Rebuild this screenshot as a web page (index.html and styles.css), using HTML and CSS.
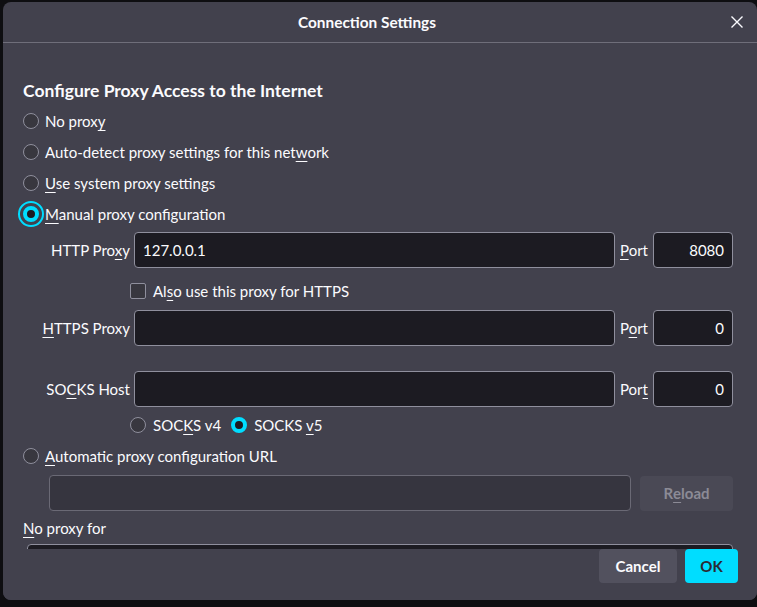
FILE: index.html
```html
<!DOCTYPE html>
<html>
<head>
<meta charset="utf-8">
<link rel="stylesheet" href="styles.css">
</head>
<body>
<div class="dialog">
  <div class="header">
    <div class="title">Connection Settings</div>
    <div class="close">
      <svg width="14" height="14" viewBox="0 0 14 14"><path d="M1.5 1.5 L12.5 12.5 M12.5 1.5 L1.5 12.5" stroke="#fbfbfe" stroke-width="1.4" fill="none"/></svg>
    </div>
  </div>
  <div class="content">
    <h1 class="heading">Configure Proxy Access to the Internet</h1>
    <div class="radio-row"><span class="radio"></span><span>No prox<u>y</u></span></div>
    <div class="radio-row"><span class="radio"></span><span>Auto-detect proxy settings for this net<u>w</u>ork</span></div>
    <div class="radio-row"><span class="radio"></span><span><u>U</u>se system proxy settings</span></div>
    <div class="radio-row"><span class="radio checked focused"></span><span><u>M</u>anual proxy configuration</span></div>

    <div class="proxy-grid">
      <label class="lbl">HTTP Pro<u>x</u>y</label>
      <div class="input">127.0.0.1</div>
      <label class="port-lbl"><u>P</u>ort</label>
      <div class="input port">8080</div>

      <div class="check-row"><span class="checkbox"></span><span>Al<u>s</u>o use this proxy for HTTPS</span></div>

      <label class="lbl"><u>H</u>TTPS Proxy</label>
      <div class="input"></div>
      <label class="port-lbl">P<u>o</u>rt</label>
      <div class="input port">0</div>

      <div class="spacer"></div>

      <label class="lbl">SO<u>C</u>KS Host</label>
      <div class="input"></div>
      <label class="port-lbl">Por<u>t</u></label>
      <div class="input port">0</div>

      <div class="socks-row">
        <span class="socks-opt"><span class="radio"></span><span>SOC<u>K</u>S v4</span></span>
        <span class="socks-opt"><span class="radio checked"></span><span>SOCKS <u>v</u>5</span></span>
      </div>
    </div>

    <div class="radio-row auto"><span class="radio"></span><span><u>A</u>utomatic proxy configuration URL</span></div>
    <div class="url-row">
      <div class="input disabled"></div>
      <div class="btn-disabled">R<u>e</u>load</div>
    </div>
    <div class="noproxy-label"><u>N</u>o proxy for</div>
    <div class="textarea"></div>
  </div>
  <div class="footer">
    <button class="btn cancel">Cancel</button>
    <button class="btn ok">OK</button>
  </div>
</div>
</body>
</html>
```

FILE: styles.css
```css
* { box-sizing: border-box; }
html, body {
  margin: 0;
  padding: 0;
  background: #0e0e11;
  height: 100%;
  overflow: hidden;
}
body {
  font-family: Lato, "Noto Sans", sans-serif;
  font-size: 15px;
  color: #fbfbfe;
}
u {
  text-decoration-thickness: 1px;
  text-underline-offset: 3px;
}
.dialog {
  margin: 2px 0 0 3px;
  width: 754px;
  height: 598px;
  background: #42414d;
  border-radius: 8px;
  display: flex;
  flex-direction: column;
  overflow: hidden;
}
.header {
  height: 41px;
  flex: none;
  border-bottom: 1px solid #6f6e7a;
  display: flex;
  align-items: center;
  justify-content: center;
  padding-right: 26px;
  position: relative;
}
.title {
  font-weight: 700;
  font-size: 15.4px;
}
.close {
  position: absolute;
  right: 13px;
  top: 13px;
  width: 14px;
  height: 14px;
  display: flex;
}
.content {
  flex: 1;
  overflow: hidden;
  padding: 0 21px 0 20px;
}
.heading {
  margin: 37px 0 0 0;
  font-size: 17.5px;
  font-weight: 700;
  line-height: 22px;
  height: 22px;
}
.radio-row {
  display: flex;
  align-items: center;
  gap: 6px;
  height: 31px;
}
.heading + .radio-row { margin-top: 3px; }
.radio {
  width: 16px;
  height: 16px;
  border-radius: 50%;
  border: 1px solid #8f8f9d;
  background: #38373f;
  flex: none;
  position: relative;
}
.radio.checked {
  border: 4px solid #00ddff;
  background: #1c1b22;
}
.radio.focused::after {
  content: "";
  position: absolute;
  left: -9px;
  top: -9px;
  width: 26px;
  height: 26px;
  border-radius: 50%;
  border: 2px solid #00ddff;
  box-sizing: border-box;
}
.proxy-grid {
  margin: 3px 0 0 22px;
  display: grid;
  grid-template-columns: 84px 481px 28px 80px;
  grid-template-rows: 36px 42px 36px 25px 36px 36px;
  column-gap: 5px;
  align-items: center;
}
.lbl {
  text-align: right;
  white-space: nowrap;
  justify-self: end;
  margin-right: -1px;
}
.port-lbl {
  white-space: nowrap;
}
.input {
  height: 36px;
  background: #1c1b22;
  border: 1px solid #8f8f9d;
  border-radius: 4px;
  padding: 0 8px;
  display: flex;
  align-items: center;
}
.input.port {
  justify-content: flex-end;
}
.check-row {
  grid-column: 2 / 5;
  display: flex;
  align-items: center;
  gap: 7px;
  margin-left: -4px;
  padding-top: 4px;
}
.checkbox {
  width: 16px;
  height: 16px;
  border: 1px solid #8f8f9d;
  border-radius: 2px;
  background: #38373f;
  flex: none;
}
.spacer {
  grid-column: 1 / 5;
}
.socks-row {
  grid-column: 2 / 5;
  margin-left: -4px;
  display: flex;
  align-items: center;
  gap: 10px;
}
.socks-opt {
  display: flex;
  align-items: center;
  gap: 7px;
}
.radio-row.auto {
  height: 26px;
}
.url-row {
  margin: 6px 0 0 26px;
  display: flex;
  align-items: center;
  gap: 9px;
  width: 684px;
}
.input.disabled {
  flex: 1;
  background: #36353f;
  border-color: #6a6975;
}
.btn-disabled {
  width: 93px;
  height: 35px;
  flex: none;
  border-radius: 4px;
  background: #4a4955;
  color: #8c8b96;
  font-weight: 700;
  display: flex;
  align-items: center;
  justify-content: center;
}
.noproxy-label {
  margin-top: 6px;
  line-height: 22px;
  height: 22px;
}
.textarea {
  margin: 5px 0 0 4px;
  width: 706px;
  height: 80px;
  background: #1c1b22;
  border: 1px solid #8f8f9d;
  border-radius: 4px;
}
.footer {
  flex: none;
  height: 51px;
  padding: 0 19px 17px 0;
  display: flex;
  justify-content: flex-end;
  align-items: flex-start;
  gap: 8px;
  background: #42414d;
}
.btn {
  height: 34px;
  border: none;
  border-radius: 4px;
  font-family: inherit;
  font-size: 15px;
  font-weight: 700;
}
.cancel {
  width: 78px;
  background: #52515e;
  color: #fbfbfe;
}
.ok {
  width: 53px;
  background: #00ddff;
  color: #2b2a33;
}
```
